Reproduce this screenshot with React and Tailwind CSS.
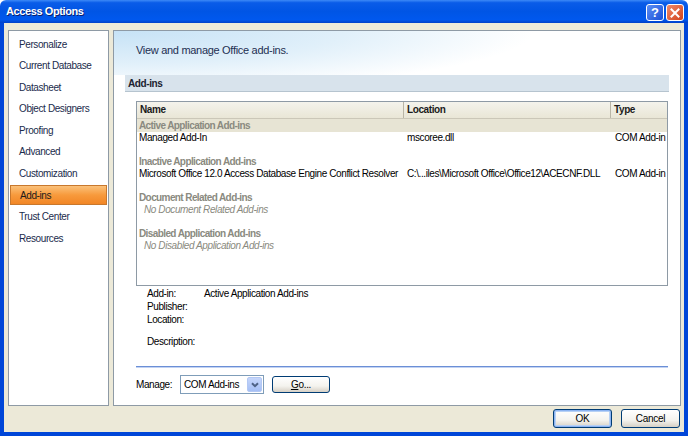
import React from "react";

const NAV = ["Personalize","Current Database","Datasheet","Object Designers","Proofing","Advanced","Customization","Add-ins","Trust Center","Resources"];

function XPButton({ children, className = "", def = false }) {
  return (
    <div className={"flex items-center justify-center rounded-[3px] border border-[#003c74] bg-[linear-gradient(to_bottom,#ffffff_0%,#f4f3ee_60%,#d6d0c5_100%)] text-[10px] tracking-[-0.3px] text-black " + (def ? "shadow-[inset_0_0_0_1px_#8cb4f2,inset_0_0_0_2px_#b7d1f5] " : "") + className}>
      {children}
    </div>
  );
}

export default function App() {
  const font = { fontFamily: '"Liberation Sans", Arial, sans-serif' };
  return (
    <div className="w-[688px] h-[436px] flex flex-col overflow-hidden select-none" style={font}>
      {/* title bar */}
      <div className="h-[23px] shrink-0 flex items-center justify-between pl-[6px] pr-[4px] rounded-t-[6px] bg-[linear-gradient(to_bottom,#3d8af7_0%,#0a5ce8_12%,#0055e5_50%,#0058ee_85%,#0040c8_100%)]">
        <span className="text-white font-bold text-[11px] tracking-[-0.4px] [text-shadow:1px_1px_0_#0a1e6e]">Access Options</span>
        <div className="flex gap-[2px] pt-[2px]">
          <div className="w-[18px] h-[17px] rounded-[3px] border border-white bg-[linear-gradient(135deg,#5c8ff5,#1a4fd6)] flex items-center justify-center text-white font-bold text-[13px] leading-none">?</div>
          <div className="w-[18px] h-[17px] rounded-[3px] border border-white bg-[linear-gradient(135deg,#f08a6a,#d2431c)] flex items-center justify-center">
            <svg width="10" height="10" viewBox="0 0 10 10"><path d="M1.5 1.5L8.5 8.5M8.5 1.5L1.5 8.5" stroke="white" strokeWidth="2" strokeLinecap="square"/></svg>
          </div>
        </div>
      </div>
      {/* body */}
      <div className="flex-1 flex flex-col bg-[#ece9d8] border-x-4 border-b-4 border-[#0046d8] pl-[4px] pr-[3px] pt-[7px]">
        <div className="h-[376px] flex gap-[4px]">
          {/* left nav */}
          <div className="w-[101px] shrink-0 bg-white border border-[#8e9aa5] pt-[3px] px-[1px] flex flex-col">
            {NAV.map((n) => (
              <div key={n} className={"h-[20px] mb-[1.6px] flex items-center pl-[9px] text-[10px] tracking-[-0.4px] whitespace-nowrap " + (n === "Add-ins" ? "bg-[linear-gradient(to_bottom,#fbc17a_0%,#f79a3c_50%,#f28626_100%)] border border-[#c8782d] text-[#1b1b1b]" : "text-[#1a2b4c]")}>
                {n}
              </div>
            ))}
          </div>
          {/* right panel */}
          <div className="flex-1 bg-white border border-[#8e9aa5] flex flex-col">
            <div className="h-[44px] shrink-0 pl-[22px] pt-[11px] text-[11px] tracking-[-0.3px] text-[#1e2f52] bg-[radial-gradient(ellipse_420px_60px_at_0%_0%,#c6e2f6_0%,#e1f0fa_55%,#ffffff_100%)]">
              View and manage Office add-ins.
            </div>
            <div className="mx-[11px] h-[17px] flex items-center pl-[3px] bg-[#d8e3ec] border-b border-[#b6c4cf] text-[10px] tracking-[-0.4px] font-bold text-[#1c2230]">Add-ins</div>
            {/* table */}
            <div className="ml-[22px] mr-[12px] mt-[9px] h-[185px] border border-[#8e9aa5] flex flex-col text-[10px] tracking-[-0.4px] leading-none overflow-hidden">
              <div className="h-[17px] shrink-0 flex bg-[linear-gradient(to_bottom,#f4f3ec,#e9e6d6)] border-b border-[#cbc7b8] font-bold text-[#1b1b1b]">
                <div className="w-[267px] pl-[3px] flex items-center border-r border-[#b9b5a6]">Name</div>
                <div className="w-[207px] pl-[3px] flex items-center border-r border-[#b9b5a6]">Location</div>
                <div className="flex-1 pl-[3px] flex items-center">Type</div>
              </div>
              <div className="h-[13px] shrink-0 flex items-center pl-[2px] bg-[#e7e4d4] font-bold tracking-[-0.6px] text-[#8a8a80]">Active Application Add-ins</div>
              <div className="h-[12px] shrink-0 flex items-center text-black">
                <div className="w-[267px] pl-[2px] whitespace-nowrap">Managed Add-In</div>
                <div className="w-[207px] pl-[3px] whitespace-nowrap">mscoree.dll</div>
                <div className="flex-1 pl-[4px] whitespace-nowrap">COM Add-in</div>
              </div>
              <div className="h-[12px] shrink-0" />
              <div className="h-[12px] shrink-0 flex items-center pl-[2px] font-bold tracking-[-0.6px] text-[#8a8a80]">Inactive Application Add-ins</div>
              <div className="h-[12px] shrink-0 flex items-center text-black">
                <div className="w-[267px] pl-[2px] whitespace-nowrap">Microsoft Office 12.0 Access Database Engine Conflict Resolver</div>
                <div className="w-[207px] pl-[3px] whitespace-nowrap">C:\...iles\Microsoft Office\Office12\ACECNF.DLL</div>
                <div className="flex-1 pl-[4px] whitespace-nowrap">COM Add-in</div>
              </div>
              <div className="h-[12px] shrink-0" />
              <div className="h-[12px] shrink-0 flex items-center pl-[2px] font-bold tracking-[-0.6px] text-[#8a8a80]">Document Related Add-ins</div>
              <div className="h-[12px] shrink-0 flex items-center pl-[7px] italic text-[#8a8a80]">No Document Related Add-ins</div>
              <div className="h-[12px] shrink-0" />
              <div className="h-[12px] shrink-0 flex items-center pl-[2px] font-bold tracking-[-0.6px] text-[#8a8a80]">Disabled Application Add-ins</div>
              <div className="h-[12px] shrink-0 flex items-center pl-[7px] italic text-[#8a8a80]">No Disabled Application Add-ins</div>
            </div>
            {/* details */}
            <div className="ml-[33px] mt-[1px] text-[10px] tracking-[-0.4px] text-black grid grid-cols-[57px_1fr] grid-rows-[13px_13px_13px_9px_13px] leading-[13px]">
              <div>Add-in:</div><div>Active Application Add-ins</div>
              <div>Publisher:</div><div></div>
              <div>Location:</div><div></div>
              <div></div><div></div>
              <div>Description:</div><div></div>
            </div>
            <div className="ml-[22px] mr-[12px] mt-[18px] h-[2px] bg-[#6b8fd6] border-b border-[#c3d3f3]" />
            <div className="ml-[22px] mt-[7px] flex items-center text-[10px] tracking-[-0.4px] text-black">
              <span className="w-[44px]">Manage:</span>
              <div className="w-[84px] h-[19px] border border-[#7f9db9] flex items-center bg-white">
                <span className="flex-1 pl-[3px] whitespace-nowrap">COM Add-ins</span>
                <div className="w-[15px] h-[15px] mr-[1px] rounded-[2px] bg-[linear-gradient(to_bottom,#c6d6fb,#a5bff5)] border border-[#b3c8f4] flex items-center justify-center">
                  <svg width="8" height="6" viewBox="0 0 8 6"><path d="M1 1.2L4 4.2L7 1.2" fill="none" stroke="#4d6185" strokeWidth="2"/></svg>
                </div>
              </div>
              <XPButton className="ml-[8px] w-[58px] h-[17px]"><span><span className="underline">G</span>o...</span></XPButton>
            </div>
          </div>
        </div>
        {/* footer */}
        <div className="flex-1 flex items-start justify-end gap-[9px] pt-[3px] pr-[1px]">
          <XPButton def className="w-[59px] h-[19px]">OK</XPButton>
          <XPButton className="w-[59px] h-[19px]">Cancel</XPButton>
        </div>
      </div>
    </div>
  );
}
